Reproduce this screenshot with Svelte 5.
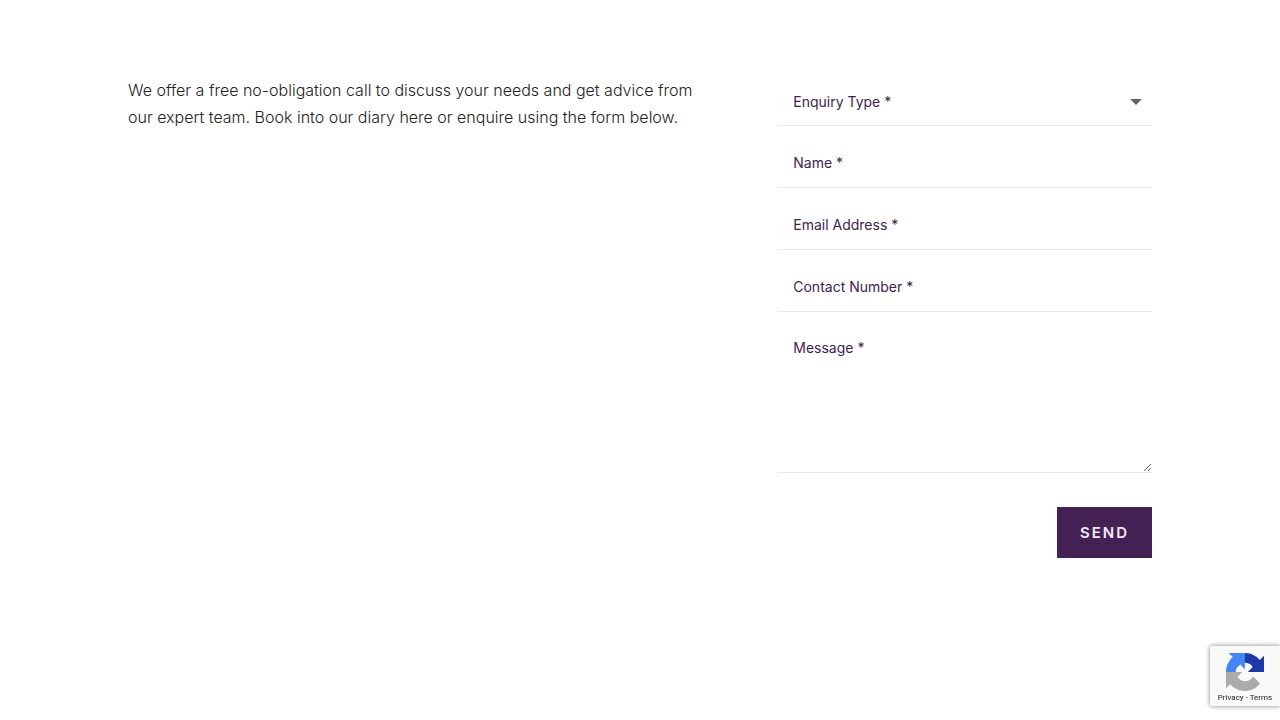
<script>
  let enquiryType = '';
  let message = '';

  const fields = [
    { id: 'name', type: 'text', label: 'Name *' },
    { id: 'email', type: 'email', label: 'Email Address *' },
    { id: 'phone', type: 'tel', label: 'Contact Number *' }
  ];
</script>

<main class="contact">
  <p class="intro">
    We offer a free no-obligation call to discuss your needs and get advice from
    our expert team. Book into our diary here or enquire using the form below.
  </p>

  <form class="form" on:submit|preventDefault>
    <div class="select-wrap">
      <select aria-label="Enquiry Type" bind:value={enquiryType}>
        <option value="">Enquiry Type *</option>
        <option value="general">General</option>
        <option value="quote">Quote</option>
      </select>
    </div>

    {#each fields as field}
      <input id={field.id} type={field.type} placeholder={field.label} aria-label={field.label} />
    {/each}

    <textarea placeholder="Message *" aria-label="Message" bind:value={message}></textarea>

    <button type="submit">SEND</button>
  </form>
</main>

<aside class="badge">
  <svg viewBox="0 0 64 64" aria-hidden="true">
    <path fill="#1c3aa9" d="M64 31.955l-.033-1.37V4.687l-7.16 7.16C50.948 4.674 42.033.093 32.05.093c-10.4 0-19.622 4.96-25.458 12.64l11.736 11.86a15.55 15.55 0 0 1 4.754-5.334c2.05-1.6 4.952-2.906 8.968-2.906.485 0 .86.057 1.135.163 4.976.393 9.288 3.14 11.828 7.124l-8.307 8.307L64 31.955" />
    <path fill="#4285f4" d="M31.862.094l-1.37.033H4.594l7.16 7.16C4.58 13.147 0 22.06 0 32.046c0 10.4 4.96 19.622 12.64 25.458L24.5 45.768a15.55 15.55 0 0 1-5.334-4.754c-1.6-2.05-2.906-4.952-2.906-8.968 0-.485.057-.86.163-1.135.393-4.976 3.14-9.288 7.124-11.828l8.307 8.307L31.862.094" />
    <path fill="#ababab" d="M.001 32.045l.033 1.37v25.898l7.16-7.16c5.86 7.173 14.774 11.754 24.76 11.754 10.4 0 19.622-4.96 25.458-12.64l-11.736-11.86a15.55 15.55 0 0 1-4.754 5.334c-2.05 1.6-4.952 2.906-8.968 2.906-.485 0-.86-.057-1.135-.163-4.976-.393-9.288-3.14-11.828-7.124l8.307-8.307c-10.522.04-22.4.066-27.295-.005" />
  </svg>
  <div class="links"><a href="#privacy">Privacy</a> - <a href="#terms">Terms</a></div>
</aside>

<style>
  :global(body) {
    margin: 0;
    background: #fff;
  }

  .contact {
    display: grid;
    grid-template-columns: minmax(0, 57.8%) minmax(0, 36.5%);
    justify-content: space-between;
    width: 80%;
    margin: 0 auto;
    padding-top: 77px;
    font-family: Inter, sans-serif;
  }

  .intro {
    margin: 0;
    font-size: 16px;
    font-weight: 300;
    line-height: 27px;
    color: #222;
  }

  .form {
    display: flex;
    flex-direction: column;
    gap: 12px;
  }

  select,
  input,
  textarea {
    display: block;
    box-sizing: border-box;
    width: 100%;
    height: 50px;
    margin: 0;
    padding: 0 15px;
    border: 0;
    border-bottom: 1px solid #e8e8e8;
    border-radius: 0;
    background: transparent;
    font-family: inherit;
    font-size: 14px;
    color: #40234f;
  }

  input::placeholder,
  textarea::placeholder {
    color: #40234f;
    opacity: 1;
  }

  .select-wrap {
    position: relative;
  }

  .select-wrap::after {
    content: '';
    position: absolute;
    top: 22px;
    right: 10px;
    border: 6px solid transparent;
    border-top-color: #666;
    border-bottom: 0;
    pointer-events: none;
  }

  select {
    appearance: none;
    height: 49px;
  }

  textarea {
    height: 149px;
    padding-top: 15px;
    resize: vertical;
  }

  button {
    align-self: flex-end;
    margin-top: 22px;
    padding: 16px 23px;
    border: 0;
    background: #432155;
    font-family: inherit;
    font-size: 15px;
    font-weight: 600;
    line-height: 19px;
    letter-spacing: 2px;
    color: #f5e6f5;
    cursor: pointer;
  }

  .badge {
    position: fixed;
    right: 0;
    bottom: 14px;
    box-sizing: border-box;
    width: 70px;
    height: 60px;
    padding-top: 7px;
    border-radius: 2px 0 0 2px;
    background: #f9f9f9;
    box-shadow: 0 0 5px #808080;
    text-align: center;
  }

  .badge svg {
    display: block;
    width: 38px;
    height: 38px;
    margin: 0 auto;
  }

  .links {
    font-family: Roboto, sans-serif;
    font-size: 8px;
    line-height: 13px;
    color: #222;
  }

  .links a {
    color: inherit;
    text-decoration: none;
  }
</style>
